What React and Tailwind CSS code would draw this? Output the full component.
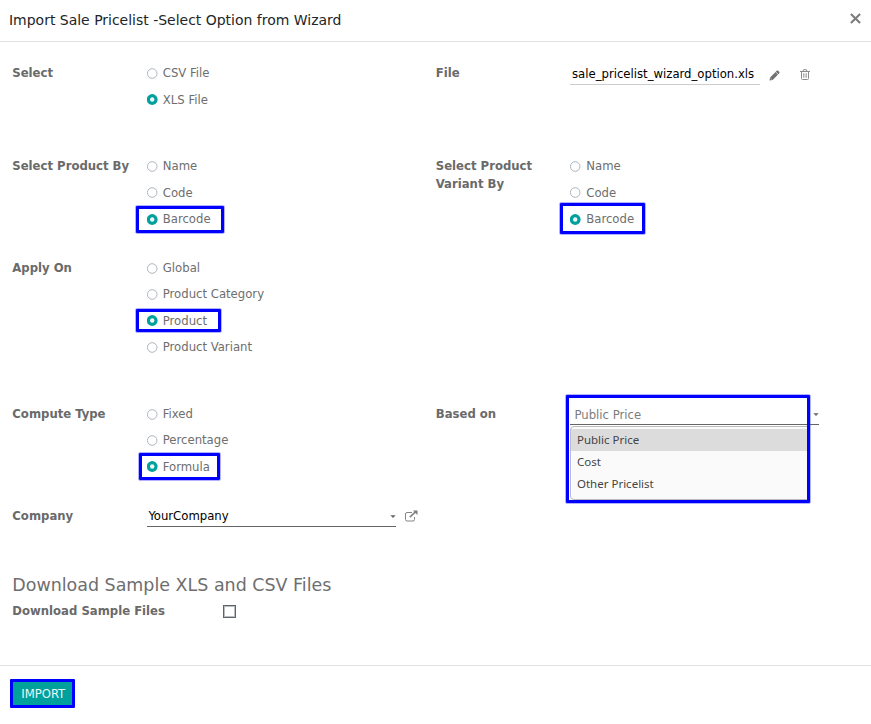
import React from "react";

const marks = "pointer-events-none absolute rounded-[1px] border-[3px] border-[#0000fe] outline outline-[0.5px] outline-[#0000fe]/30";

// Rows alternate between 26 and 27 pixels; `low` rows follow a taller one.
function Radio({ label, low, tall, checked, mark }) {
  return (
    <div className={`relative flex items-start gap-[5px] pt-[4px] ${tall ? "h-[27px]" : "h-[26px]"}`}>
      <svg width="11" height="11" viewBox="0 0 11 11" className={`shrink-0 ${low ? "mt-[3px]" : "mt-[4px]"}`}>
        {checked ? (
          <>
            <circle cx="5.2" cy="5.5" r="5.4" fill="#00a09d" />
            <circle cx="5.2" cy="5.5" r="2.2" fill="#f1f5f6" />
          </>
        ) : (
          <circle cx="5.2" cy="5.5" r="4.8" fill="#fff" stroke="#adb5bd" strokeWidth="1" />
        )}
      </svg>
      <span className="whitespace-nowrap text-[#6e6e6e]">{label}</span>
      {mark && <span className={`${marks} ${mark}`} />}
    </div>
  );
}

function Field({ label, options, mark, value, tallRow }) {
  return (
    <div className="flex">
      <div className="w-[134.5px] shrink-0 pt-[4px] pr-2 leading-[18px] font-bold text-[#6a6a6a]">{label}</div>
      <div>
        {options.map((o, i) => (
          <Radio
            key={o}
            label={o}
            tall={i === tallRow}
            low={i === tallRow + 1}
            checked={o === value}
            mark={o === value ? mark : null}
          />
        ))}
      </div>
    </div>
  );
}

function Caret() {
  return (
    <svg width="6" height="4" viewBox="0 0 6 4" className="mt-px shrink-0">
      <path d="M0.3 0.3h5.4L3 3z" fill="#666" />
    </svg>
  );
}

export default function App() {
  return (
    <div className="flex h-[724px] w-[871px] flex-col overflow-hidden bg-white text-[12.98px] leading-[18px] [font-family:'DejaVu_Sans_Condensed','DejaVu_Sans',sans-serif] [font-stretch:condensed]">
      <header className="flex h-[42px] shrink-0 items-center justify-between border-b border-[#dee0e2] pr-[10px] pl-[9px]">
        <h1 className="pb-[1px] text-[13.97px] text-[#212529] [font-family:'DejaVu_Sans',sans-serif] [font-stretch:normal]">
          Import Sale Pricelist -Select Option from Wizard
        </h1>
        <svg width="11" height="11" viewBox="0 0 11 11" className="mb-[4px]">
          <path d="M.9 .9l9.2 9.2M10.1 .9l-9.2 9.2" stroke="#7c7c7c" strokeWidth="2.1" />
        </svg>
      </header>

      <main className="h-[623px] shrink-0 pt-[18px] pl-[12.3px]">
        <section className="grid h-[93px] grid-cols-[423.5px_1fr]">
          <Field label="Select" options={["CSV File", "XLS File"]} value="XLS File" tallRow={0} />
          <div className="flex">
            <div className="w-[134.2px] shrink-0 pt-[4px] font-bold text-[#6a6a6a]">File</div>
            <div className="h-[25px] w-[190px] border-b border-[#ccc] pt-[5px] pl-[2px] text-black">
              sale_pricelist_wizard_option.xls
            </div>
            <svg width="11" height="11" viewBox="0 0 11 11" className="mt-[10px] ml-[9px]">
              <path d="M0.5 10.5l.6-3.1 5-5 2.5 2.5-5 5zM6.8 1.7l1.1-1.1q.5-.4 1 0l1.5 1.5q.4.5 0 1L9.3 4.2z" fill="#707070" />
              <path d="M6 1.9l3 3" stroke="#707070" strokeWidth=".9" />
              <path d="M1.3 8l1.7 1.7" stroke="#fff" strokeWidth=".4" />
            </svg>
            <svg width="10" height="11" viewBox="0 0 10 11" className="mt-[9px] ml-[20px]" fill="none" stroke="#8c8c8c">
              <path d="M0 2.5h10M3 2.3l.6-1.6h2.8l.6 1.6M1.5 2.5v7q0 1 1 1h5q1 0 1-1v-7" />
              <path d="M3.5 4.3v4.4M5 4.3v4.4M6.5 4.3v4.4" strokeWidth=".7" />
            </svg>
          </div>
        </section>

        <section className="grid h-[102px] grid-cols-[423.5px_1fr]">
          <Field
            label="Select Product By"
            options={["Name", "Code", "Barcode"]}
            value="Barcode"
            tallRow={0}
            mark="-left-[11px] -top-[0.5px] h-[27px] w-[88.5px]"
          />
          <Field
            label="Select Product Variant By"
            options={["Name", "Code", "Barcode"]}
            value="Barcode"
            tallRow={0}
            mark="-left-[10.6px] -top-[3px] h-[30.5px] w-[85.5px]"
          />
        </section>

        <section className="h-[146px]">
          <Field
            label="Apply On"
            options={["Global", "Product Category", "Product", "Product Variant"]}
            value="Product"
            tallRow={1}
            mark="-left-[11px] top-[0.7px] h-[23.5px] w-[85.5px]"
          />
        </section>

        <section className="grid h-[102px] grid-cols-[423.5px_1fr]">
          <Field
            label="Compute Type"
            options={["Fixed", "Percentage", "Formula"]}
            value="Formula"
            tallRow={1}
            mark="-left-[8px] -top-[1.3px] h-[27.5px] w-[81.5px]"
          />
          <div className="flex">
            <div className="w-[134.2px] shrink-0 pt-[4px] font-bold text-[#6a6a6a]">Based on</div>
            <div className="relative h-[24px] w-[249px]">
              <div className="flex h-[24px] items-center justify-between border-b border-[#666] pt-[4px] pl-[4.5px] text-[#7c7c7c]">
                Public Price
                <Caret />
              </div>
              <div className="absolute top-[24.5px] left-0 h-[74px] w-[239px] rounded-l-[4px] border border-[#bbb] bg-[#fafafa] pt-[2.5px] text-[11.5px] leading-[22px] text-[#444] [font-family:'Noto_Sans',sans-serif] [font-stretch:normal]">
                <div className="bg-[#dcdcdc] pl-[6px]">Public Price</div>
                <div className="pl-[6px]">Cost</div>
                <div className="pl-[6px]">Other Pricelist</div>
              </div>
              <span className={`${marks} -top-[6px] -left-[4px] h-[108px] w-[244.5px]`} />
            </div>
          </div>
        </section>

        <section className="flex h-[72px]">
          <div className="w-[134.5px] shrink-0 pt-[4px] font-bold text-[#6a6a6a]">Company</div>
          <div className="flex h-[24px] w-[249.5px] items-center justify-between border-b border-[#666] pt-[3px] pl-[1.6px] text-black">
            YourCompany
            <Caret />
          </div>
          <svg width="13" height="12" viewBox="0 0 13 12" className="mt-[7px] ml-[8.7px]" fill="none" stroke="#858585">
            <path d="M7 2.5H2q-1.5 0-1.5 1.5v5.5q0 1.5 1.5 1.5h6q1.5 0 1.5-1.5V7" />
            <path d="M4.8 7.2L10.5 1.8" strokeWidth="1.6" />
            <path d="M8 .5h4.5V5z" fill="#7c7c7c" stroke="none" />
          </svg>
        </section>

        <h2 className="h-[27px] text-[17.47px] leading-[20px] text-[#6e6e6e] [font-family:'DejaVu_Sans',sans-serif] [font-stretch:normal]">
          Download Sample XLS and CSV Files
        </h2>
        <div className="flex">
          <div className="w-[210.7px] shrink-0 font-bold text-[#6a6a6a]">Download Sample Files</div>
          <div className="mt-[3px] h-[13px] w-[13px] border border-[#5f6468] bg-white shadow-[inset_0_0_0_1px_#b9bdc1]" />
        </div>
      </main>

      <footer className="flex grow border-t border-[#dee0e2] pt-[13px] pl-[9.5px]">
        <button className="h-[28.5px] w-[65.5px] rounded-[1px] border-[3px] border-[#0000fe] bg-[#00a09d] pt-[1px] pl-[2px] text-[#e8f7f7]">
          IMPORT
        </button>
      </footer>
    </div>
  );
}
